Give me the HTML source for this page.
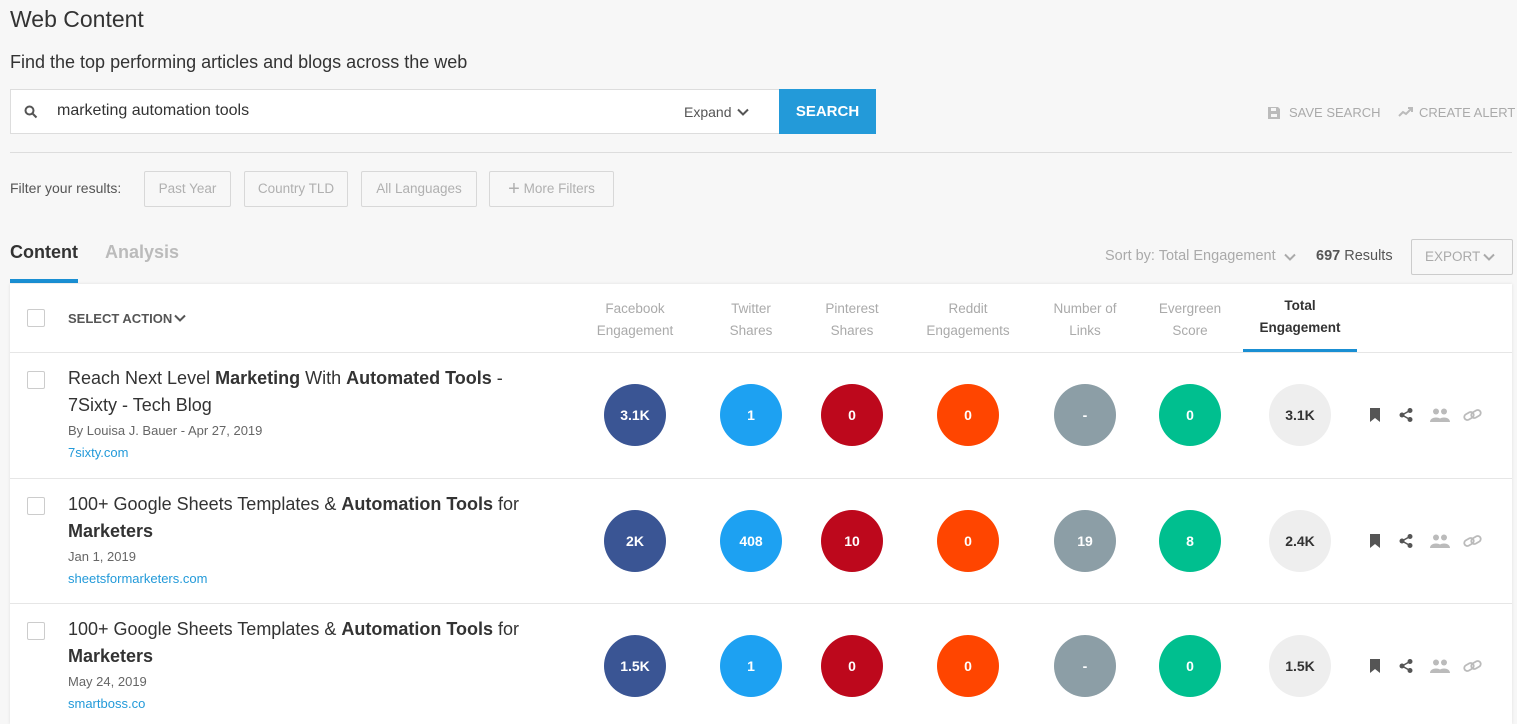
<!DOCTYPE html>
<html><head><meta charset="utf-8"><style>
*{box-sizing:border-box;margin:0;padding:0}
body{width:1517px;height:720px;overflow:hidden;background:#f7f7f7;font-family:"Liberation Sans",sans-serif;color:#333;position:relative}
.a{position:absolute;white-space:nowrap}
h1{position:absolute;left:10px;top:6px;font-size:23px;font-weight:normal;color:#333}
.sub{left:10px;top:52px;font-size:18px;color:#333}
.search{left:10px;top:89px;width:769px;height:45px;background:#fff;border:1px solid #ddd;border-right:none}
.btn{left:779px;top:89px;width:97px;height:45px;background:#239ad9;color:#fff;font-weight:bold;font-size:15px;text-align:center;line-height:45px}
.fb{top:171px;height:36px;border:1px solid #d8d8d8;border-radius:2px;color:#b0b0b0;font-size:13.5px;line-height:34px;text-align:center}
.panel{left:10px;top:284px;width:1502px;height:440px;background:#fff;box-shadow:0 0 3px rgba(0,0,0,.1)}
.hd{top:298px;font-size:13.5px;color:#aaa;text-align:center;line-height:22px;width:110px}
.row{left:10px;width:1502px;border-top:1px solid #e6e6e6}
.c{width:62px;height:62px;border-radius:50%;color:#fff;font-weight:bold;font-size:14px;text-align:center;line-height:62px}
.cb{width:18px;height:18px;border:1px solid #ccc;border-radius:2px;background:#fff}
.t{left:68px;font-size:18px;line-height:27px;color:#333;width:500px;white-space:normal}
.m{left:68px;font-size:13px;color:#666}
.d{left:68px;font-size:13px;color:#239ad9}
</style></head><body>
<h1>Web Content</h1>
<div class="a sub">Find the top performing articles and blogs across the web</div>
<div class="a search">
<svg class="a" style="left:13px;top:15px" width="14" height="14" viewBox="0 0 14 14"><circle cx="5.5" cy="5.5" r="4" fill="none" stroke="#555" stroke-width="2"/><path d="M8.5 8.5L12.5 12.5" stroke="#555" stroke-width="2"/></svg>
<div class="a" style="left:46px;top:12px;font-size:16px;color:#333">marketing automation tools</div>
<div class="a" style="left:673px;top:14px;font-size:14px;color:#555">Expand</div>
<svg class="a" style="left:726px;top:18px" width="12" height="9" viewBox="0 0 12 9"><path d="M1 1.5L6 6.5L11 1.5" fill="none" stroke="#555" stroke-width="2"/></svg>
</div>
<div class="a btn">SEARCH</div>
<svg class="a" style="left:1268px;top:107px" width="12" height="12" viewBox="0 0 12 12"><path d="M0 0H10L12 2V12H0Z" fill="#bbb"/><rect x="3" y="1" width="5" height="3" fill="#f7f7f7"/><rect x="3" y="7" width="6" height="3" fill="#f7f7f7"/></svg>
<div class="a" style="left:1289px;top:105px;font-size:13px;color:#aaa">SAVE SEARCH</div>
<svg class="a" style="left:1398px;top:106px" width="16" height="12" viewBox="0 0 16 12"><path d="M1 10L5 6L8 8L14 2M10 2H14V6" fill="none" stroke="#bbb" stroke-width="2"/></svg>
<div class="a" style="left:1419px;top:105px;font-size:13px;color:#aaa">CREATE ALERT</div>
<div class="a" style="left:10px;top:152px;width:1502px;height:1px;background:#ddd"></div>
<div class="a" style="left:10px;top:180px;font-size:14px;color:#555">Filter your results:</div>
<div class="a fb" style="left:144px;width:87px">Past Year</div>
<div class="a fb" style="left:244px;width:104px">Country TLD</div>
<div class="a fb" style="left:361px;width:116px">All Languages</div>
<div class="a fb" style="left:489px;width:125px"><span style="font-size:20px;vertical-align:-2px">+</span> More Filters</div>
<div class="a" style="left:10px;top:242px;font-size:18px;font-weight:bold;color:#333">Content</div>
<div class="a" style="left:10px;top:279px;width:68px;height:4px;background:#1a8fd3"></div>
<div class="a" style="left:105px;top:242px;font-size:18px;font-weight:bold;color:#bbb">Analysis</div>
<div class="a" style="left:1105px;top:248px;font-size:14.5px;color:#aaa">Sort by: Total Engagement</div>
<svg class="a" style="left:1284px;top:253px" width="12" height="9" viewBox="0 0 12 9"><path d="M1 1.5L6 6.5L11 1.5" fill="none" stroke="#aaa" stroke-width="2"/></svg>
<div class="a" style="left:1316px;top:248px;font-size:14.5px;color:#555"><b>697</b> Results</div>
<div class="a" style="left:1411px;top:239px;width:102px;height:36px;border:1px solid #ccc;border-radius:2px;font-size:13.5px;color:#aaa;line-height:34px;padding-left:13px">EXPORT</div>
<svg class="a" style="left:1483px;top:253px" width="12" height="9" viewBox="0 0 12 9"><path d="M1 1.5L6 6.5L11 1.5" fill="none" stroke="#aaa" stroke-width="2"/></svg>
<div class="a panel"></div>
<div class="a cb" style="left:27px;top:309px"></div>
<div class="a" style="left:68px;top:311px;font-size:13px;font-weight:bold;color:#555">SELECT ACTION</div>
<svg class="a" style="left:174px;top:314px" width="12" height="9" viewBox="0 0 12 9"><path d="M1 1.5L6 6.5L11 1.5" fill="none" stroke="#555" stroke-width="2"/></svg>
<div class="a hd" style="left:580px">Facebook<br>Engagement</div>
<div class="a hd" style="left:696px">Twitter<br>Shares</div>
<div class="a hd" style="left:797px">Pinterest<br>Shares</div>
<div class="a hd" style="left:913px">Reddit<br>Engagements</div>
<div class="a hd" style="left:1030px">Number of<br>Links</div>
<div class="a hd" style="left:1135px">Evergreen<br>Score</div>
<div class="a hd" style="left:1245px;top:295px;color:#333;font-weight:bold">Total<br>Engagement</div>
<div class="a" style="left:1243px;top:349px;width:114px;height:4px;background:#1a8fd3"></div>

<div class="a row" style="top:352px"></div>
<div class="a row" style="top:478px"></div>
<div class="a row" style="top:603px"></div>

<div id="rows"></div>
<script>
var rows=[
{y:352,t:'Reach Next Level <b>Marketing</b> With <b>Automated Tools</b> -<br>7Sixty - Tech Blog',m:'By Louisa J. Bauer - Apr 27, 2019',d:'7sixty.com',v:['3.1K','1','0','0','-','0','3.1K']},
{y:478,t:'100+ Google Sheets Templates &amp; <b>Automation Tools</b> for<br><b>Marketers</b>',m:'Jan 1, 2019',d:'sheetsformarketers.com',v:['2K','408','10','0','19','8','2.4K']},
{y:603,t:'100+ Google Sheets Templates &amp; <b>Automation Tools</b> for<br><b>Marketers</b>',m:'May 24, 2019',d:'smartboss.co',v:['1.5K','1','0','0','-','0','1.5K']}];
var cx=[635,751,852,968,1085,1190,1300],col=['#3a5594','#1da1f2','#bd081c','#ff4500','#8c9ea6','#00bf8f','#eee'];
var h='';
rows.forEach(function(r){
 var y=r.y;
 h+='<div class="a cb" style="left:27px;top:'+(y+19)+'px"></div>';
 h+='<div class="a t" style="top:'+(y+13)+'px">'+r.t+'</div>';
 h+='<div class="a m" style="top:'+(y+71)+'px">'+r.m+'</div>';
 h+='<div class="a d" style="top:'+(y+93)+'px">'+r.d+'</div>';
 r.v.forEach(function(v,i){h+='<div class="a c" style="left:'+(cx[i]-31)+'px;top:'+(y+32)+'px;background:'+col[i]+(i==6?';color:#333':'')+'">'+v+'</div>';});
 var iy=y+56;
 h+='<svg class="a" style="left:1370px;top:'+iy+'px" width="10" height="14" viewBox="0 0 10 14"><path d="M0 0H10V14L5 10L0 14Z" fill="#555"/></svg>';
 h+='<svg class="a" style="left:1399px;top:'+iy+'px" width="14" height="14" viewBox="0 0 14 14"><circle cx="11" cy="2.5" r="2.5" fill="#555"/><circle cx="3" cy="7" r="2.5" fill="#555"/><circle cx="11" cy="11.5" r="2.5" fill="#555"/><path d="M11 2.5L3 7L11 11.5" stroke="#555" stroke-width="1.5" fill="none"/></svg>';
 h+='<svg class="a" style="left:1430px;top:'+iy+'px" width="20" height="14" viewBox="0 0 20 14"><circle cx="6" cy="3.5" r="3" fill="#bbb"/><circle cx="14" cy="3.5" r="3" fill="#bbb"/><path d="M0 14C0 8 12 8 12 14Z M8 14C8 8 20 8 20 14Z" fill="#bbb"/></svg>';
 h+='<svg class="a" style="left:1463px;top:'+iy+'px" width="19" height="14" viewBox="0 0 19 14"><g fill="none" stroke="#bbb" stroke-width="1.8"><rect x="1" y="5" width="10" height="6" rx="3" transform="rotate(-30 6 8)"/><rect x="8" y="3" width="10" height="6" rx="3" transform="rotate(-30 13 6)"/></g></svg>';
});
document.getElementById('rows').innerHTML=h;
</script>
</body></html>
